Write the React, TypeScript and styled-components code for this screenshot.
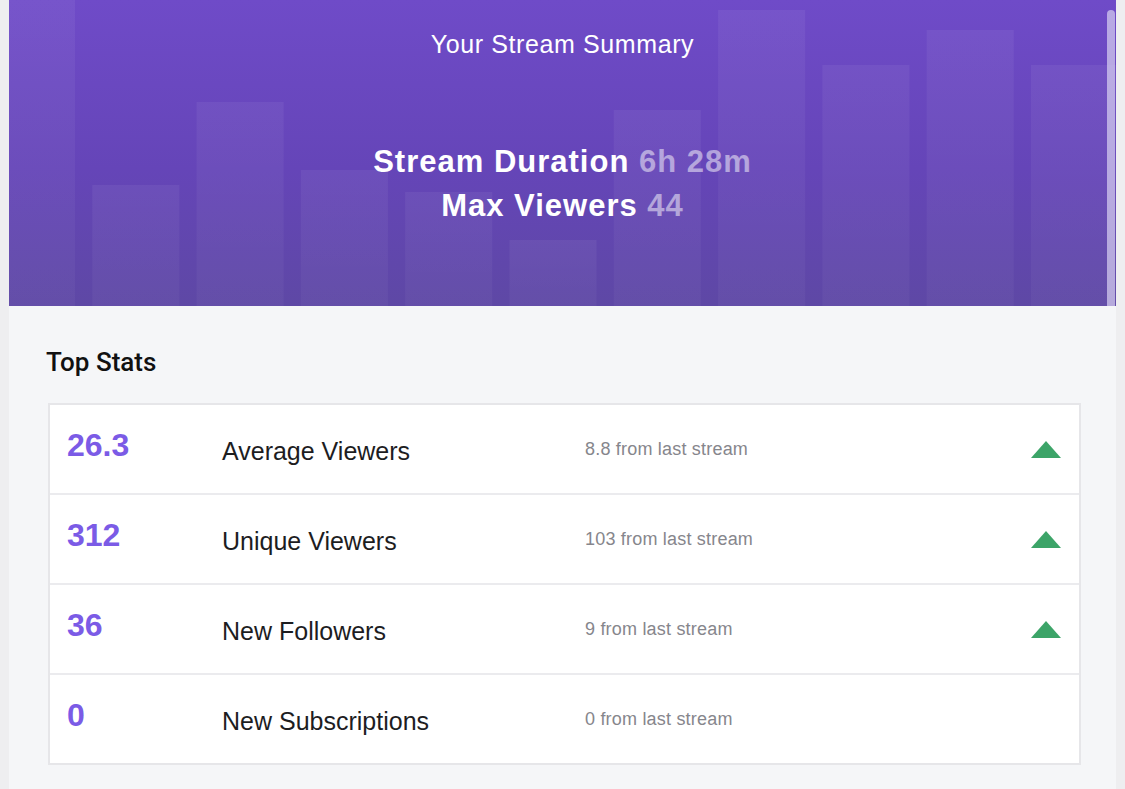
import styled, { createGlobalStyle } from "styled-components";

const GlobalStyle = createGlobalStyle`
  html, body {
    margin: 0;
    padding: 0;
    background: #eeeef0;
    font-family: "Liberation Sans", Arial, Helvetica, sans-serif;
  }
`;

const Page = styled.div`
  padding: 0 9px;
  min-height: 789px;
  box-sizing: border-box;
`;

const Panel = styled.main`
  background: #f5f6f8;
  min-height: 789px;
`;

const Hero = styled.header`
  position: relative;
  height: 306px;
  overflow: hidden;
  background: linear-gradient(180deg, #6f4bc8 0%, #6545b8 55%, #5e48a5 100%);
  display: flex;
  flex-direction: column;
  align-items: center;
  color: #fff;
`;

const ChartBg = styled.svg`
  position: absolute;
  inset: 0;
  width: 100%;
  height: 100%;
`;

const ScrollThumb = styled.div`
  position: absolute;
  top: 10px;
  right: 1px;
  width: 8px;
  bottom: 0;
  border-radius: 4px 4px 0 0;
  background: rgba(214, 206, 240, 0.72);
`;

const HeroTitle = styled.h1`
  position: relative;
  margin: 28px 0 0;
  font-size: 25px;
  font-weight: 400;
  letter-spacing: 0.6px;
  line-height: 32px;
`;

const HeroStats = styled.div`
  position: relative;
  margin-top: 80px;
  display: flex;
  flex-direction: column;
  align-items: center;
`;

const HeroLine = styled.div`
  font-size: 31px;
  font-weight: 700;
  letter-spacing: 1px;
  line-height: 44px;
`;

const HeroValue = styled.span`
  color: rgba(255, 255, 255, 0.5);
`;

const Body = styled.section`
  padding: 40px 35px 0 37px;
`;

const SectionTitle = styled.h2`
  margin: 0 0 25px;
  font-family: Roboto, "Liberation Sans", Arial, sans-serif;
  font-size: 26px;
  font-weight: 500;
  line-height: 32px;
  color: #111;
`;

const StatTable = styled.div`
  margin-left: 2px;
  border: 2px solid #e6e6e9;
  background: #ebebee;
  display: flex;
  flex-direction: column;
  gap: 2px;
`;

const StatRow = styled.div`
  height: 88px;
  background: #fff;
  display: grid;
  grid-template-columns: 155px 363px 1fr 30px;
  align-items: center;
  padding: 0 18px 0 17px;
`;

const StatNumber = styled.div`
  font-size: 32px;
  font-weight: 700;
  color: #7b5be6;
  padding-bottom: 8px;
`;

const StatLabel = styled.div`
  font-size: 25px;
  color: #1d1d1f;
  padding-top: 4px;
`;

const StatChange = styled.div`
  font-size: 18px;
  letter-spacing: 0.2px;
  color: #86868c;
`;

const UpArrow = styled.div<{ $show: boolean }>`
  width: 0;
  height: 0;
  border-left: 15px solid transparent;
  border-right: 15px solid transparent;
  border-bottom: 17px solid ${(p) => (p.$show ? "#3ca468" : "transparent")};
`;

const barTops = [0, 185, 102, 170, 192, 240, 110, 10, 65, 30, 65];

const stats = [
  { value: "26.3", label: "Average Viewers", change: "8.8 from last stream", up: true },
  { value: "312", label: "Unique Viewers", change: "103 from last stream", up: true },
  { value: "36", label: "New Followers", change: "9 from last stream", up: true },
  { value: "0", label: "New Subscriptions", change: "0 from last stream", up: false },
];

export default function App() {
  return (
    <>
      <GlobalStyle />
      <Page>
        <Panel>
          <Hero>
            <ChartBg viewBox="0 0 1107 306" preserveAspectRatio="none">
              <defs>
                <linearGradient id="barFill" x1="0" y1="0" x2="0" y2="1">
                  <stop offset="0" stopColor="#ffffff" stopOpacity="0.055" />
                  <stop offset="1" stopColor="#ffffff" stopOpacity="0.035" />
                </linearGradient>
              </defs>
              {barTops.map((top, i) => (
                <rect
                  key={i}
                  x={-21 + i * 104.3}
                  y={top}
                  width={87}
                  height={306 - top}
                  fill="url(#barFill)"
                />
              ))}
            </ChartBg>
            <ScrollThumb />
            <HeroTitle>Your Stream Summary</HeroTitle>
            <HeroStats>
              <HeroLine>
                Stream Duration <HeroValue>6h 28m</HeroValue>
              </HeroLine>
              <HeroLine>
                Max Viewers <HeroValue>44</HeroValue>
              </HeroLine>
            </HeroStats>
          </Hero>
          <Body>
            <SectionTitle>Top Stats</SectionTitle>
            <StatTable>
              {stats.map((s) => (
                <StatRow key={s.label}>
                  <StatNumber>{s.value}</StatNumber>
                  <StatLabel>{s.label}</StatLabel>
                  <StatChange>{s.change}</StatChange>
                  <UpArrow $show={s.up} />
                </StatRow>
              ))}
            </StatTable>
          </Body>
        </Panel>
      </Page>
    </>
  );
}
